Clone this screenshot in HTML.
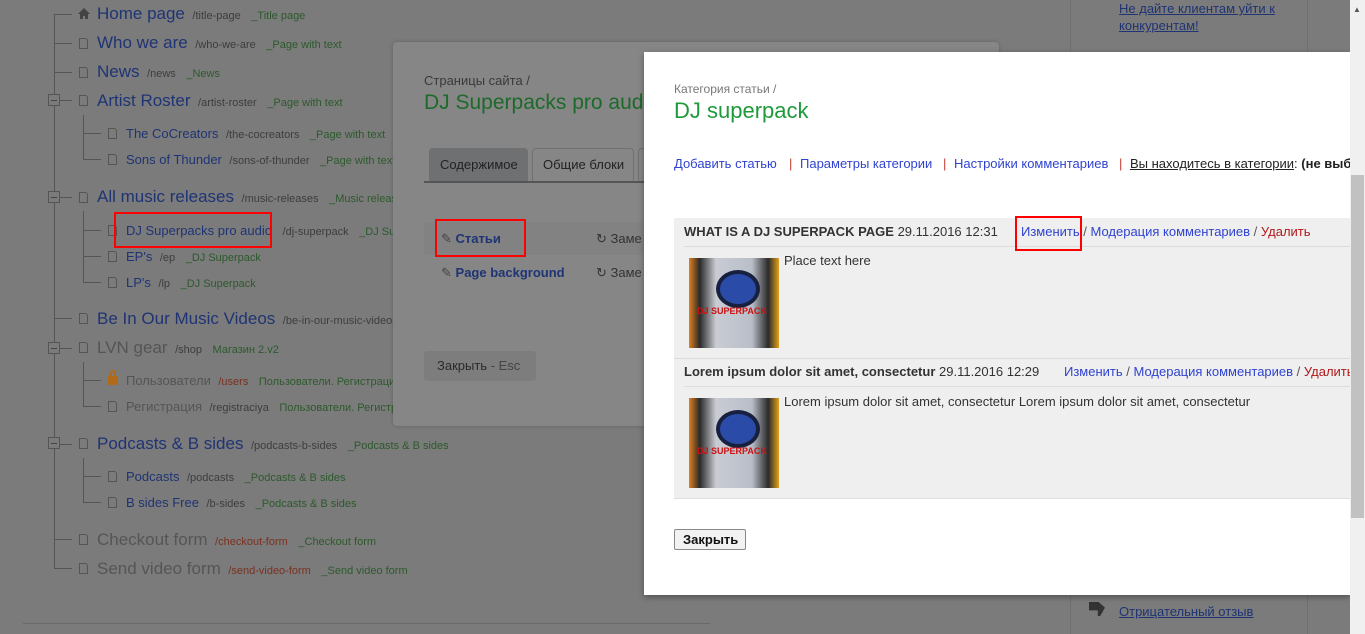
<!DOCTYPE html>
<html><head><meta charset="utf-8"><style>
*{margin:0;padding:0;box-sizing:border-box}
body{width:1365px;height:634px;overflow:hidden;background:#7b7b7b;font-family:"Liberation Sans","Noto Sans CJK SC",sans-serif;position:relative}
.a{position:absolute;white-space:nowrap}
.l1{font-size:17px;color:#1f3474}
.l2{font-size:13px;color:#1f3474}
.p{font-size:11px;color:#3d3d3d}
.g{font-size:11px;color:#2c5a2c}
.gr{color:#555!important}
.r{color:#7a3020!important}
.vl{position:absolute;width:1px;background:#555}
.hl{position:absolute;height:1px;background:#555}
.ic{position:absolute;width:9px;height:11px;border:1px solid #555;border-radius:0 3px 0 0}
.mb{position:absolute;width:12px;height:12px;border:1px solid #555;background:#7b7b7b}
.mb:after{content:"";position:absolute;left:2px;right:2px;top:5px;height:1px;background:#444}
.red{position:absolute;border:2px solid #f00}
.thumb{position:absolute;width:90px;height:90px;background:linear-gradient(90deg,#e2801c 0,#2a2a2a 12%,#c9ccd3 30%,#b9bec8 70%,#2a2a2a 88%,#e2a01c 100%)}
.thumb:before{content:"";position:absolute;left:27px;top:12px;width:36px;height:30px;border-radius:50%;background:#2a4ca8;border:4px solid #182040}
.thumb:after{content:"DJ SUPERPACK";position:absolute;left:8px;top:48px;font:bold 9px "Liberation Sans",sans-serif;color:#d01010}
.ml{color:#2f43d0}
.sep{color:#c04030}
</style></head><body>

<div class="vl" style="left:54px;top:14px;height:555px"></div>
<div class="hl" style="left:54px;top:14px;width:18px"></div>
<div class="hl" style="left:54px;top:43px;width:18px"></div>
<div class="hl" style="left:54px;top:72px;width:18px"></div>
<div class="hl" style="left:54px;top:100px;width:18px"></div>
<div class="hl" style="left:54px;top:197px;width:18px"></div>
<div class="hl" style="left:54px;top:318px;width:18px"></div>
<div class="hl" style="left:54px;top:348px;width:18px"></div>
<div class="hl" style="left:54px;top:444px;width:18px"></div>
<div class="hl" style="left:54px;top:539px;width:18px"></div>
<div class="hl" style="left:54px;top:568px;width:18px"></div>
<div class="vl" style="left:83px;top:115px;height:45px"></div>
<div class="hl" style="left:83px;top:133px;width:18px"></div><div class="hl" style="left:83px;top:159px;width:18px"></div>
<div class="vl" style="left:83px;top:211px;height:71px"></div>
<div class="hl" style="left:83px;top:230px;width:18px"></div><div class="hl" style="left:83px;top:256px;width:18px"></div><div class="hl" style="left:83px;top:282px;width:18px"></div>
<div class="vl" style="left:83px;top:362px;height:44px"></div>
<div class="hl" style="left:83px;top:380px;width:18px"></div><div class="hl" style="left:83px;top:406px;width:18px"></div>
<div class="vl" style="left:83px;top:458px;height:44px"></div>
<div class="hl" style="left:83px;top:476px;width:18px"></div><div class="hl" style="left:83px;top:502px;width:18px"></div>
<div class="mb" style="left:48px;top:94px"></div><div class="mb" style="left:48px;top:191px"></div><div class="mb" style="left:48px;top:342px"></div><div class="mb" style="left:48px;top:437px"></div>

<svg class="a" style="left:78px;top:8px" width="12" height="11" viewBox="0 0 12 11"><path d="M6 0L0 6h2v5h3V8h2v3h3V6h2z" fill="#444"/></svg>
<div class="ic" style="left:79px;top:38px"></div><div class="ic" style="left:79px;top:67px"></div><div class="ic" style="left:79px;top:95px"></div>
<div class="ic" style="left:108px;top:128px"></div><div class="ic" style="left:108px;top:154px"></div>
<div class="ic" style="left:79px;top:192px"></div><div class="ic" style="left:108px;top:225px"></div><div class="ic" style="left:108px;top:251px"></div><div class="ic" style="left:108px;top:277px"></div>
<div class="ic" style="left:79px;top:313px"></div><div class="ic" style="left:79px;top:342px"></div>
<div class="a" style="left:108px;top:376px;width:10px;height:9px;background:#b06a1a;border-radius:1px"></div>
<div class="a" style="left:110px;top:370px;width:6px;height:8px;border:2px solid #b06a1a;border-bottom:0;border-radius:3px 3px 0 0"></div>
<div class="ic" style="left:108px;top:401px"></div><div class="ic" style="left:79px;top:438px"></div><div class="ic" style="left:108px;top:471px"></div><div class="ic" style="left:108px;top:497px"></div><div class="ic" style="left:79px;top:534px"></div><div class="ic" style="left:79px;top:563px"></div>

<div class="a" style="left:97px;top:4px"><span class="l1">Home page</span> <span class="p">&nbsp;/title-page</span> <span class="g">&nbsp;&nbsp;_Title page</span></div>
<div class="a" style="left:97px;top:33px"><span class="l1">Who we are</span> <span class="p">&nbsp;/who-we-are</span> <span class="g">&nbsp;&nbsp;_Page with text</span></div>
<div class="a" style="left:97px;top:62px"><span class="l1">News</span> <span class="p">&nbsp;/news</span> <span class="g">&nbsp;&nbsp;_News</span></div>
<div class="a" style="left:97px;top:91px"><span class="l1">Artist Roster</span> <span class="p">&nbsp;/artist-roster</span> <span class="g">&nbsp;&nbsp;_Page with text</span></div>
<div class="a" style="left:126px;top:125px"><span class="l2">The CoCreators</span> <span class="p">&nbsp;/the-cocreators</span> <span class="g">&nbsp;&nbsp;_Page with text</span></div>
<div class="a" style="left:126px;top:151px"><span class="l2">Sons of Thunder</span> <span class="p">&nbsp;/sons-of-thunder</span> <span class="g">&nbsp;&nbsp;_Page with text</span></div>
<div class="a" style="left:97px;top:187px"><span class="l1">All music releases</span> <span class="p">&nbsp;/music-releases</span> <span class="g">&nbsp;&nbsp;_Music releases</span></div>
<div class="a" style="left:126px;top:222px"><span class="l2">DJ Superpacks pro audio</span> <span class="p">&nbsp;&nbsp;/dj-superpack</span> <span class="g">&nbsp;&nbsp;_DJ Superpack</span></div>
<div class="a" style="left:126px;top:248px"><span class="l2">EP's</span> <span class="p">&nbsp;/ep</span> <span class="g">&nbsp;&nbsp;_DJ Superpack</span></div>
<div class="a" style="left:126px;top:274px"><span class="l2">LP's</span> <span class="p">&nbsp;/lp</span> <span class="g">&nbsp;&nbsp;_DJ Superpack</span></div>
<div class="a" style="left:97px;top:309px"><span class="l1">Be In Our Music Videos</span> <span class="p">&nbsp;/be-in-our-music-videos</span></div>
<div class="a" style="left:97px;top:338px"><span class="l1 gr">LVN gear</span> <span class="p">&nbsp;/shop</span> <span class="g">&nbsp;&nbsp;Магазин 2.v2</span></div>
<div class="a" style="left:126px;top:372px"><span class="l2 gr">Пользователи</span> <span class="p r">&nbsp;/users</span> <span class="g">&nbsp;&nbsp;Пользователи. Регистрация</span></div>
<div class="a" style="left:126px;top:398px"><span class="l2 gr">Регистрация</span> <span class="p">&nbsp;/registraciya</span> <span class="g">&nbsp;&nbsp;Пользователи. Регистрация</span></div>
<div class="a" style="left:97px;top:434px"><span class="l1">Podcasts &amp; B sides</span> <span class="p">&nbsp;/podcasts-b-sides</span> <span class="g">&nbsp;&nbsp;_Podcasts &amp; B sides</span></div>
<div class="a" style="left:126px;top:468px"><span class="l2">Podcasts</span> <span class="p">&nbsp;/podcasts</span> <span class="g">&nbsp;&nbsp;_Podcasts &amp; B sides</span></div>
<div class="a" style="left:126px;top:494px"><span class="l2">B sides Free</span> <span class="p">&nbsp;/b-sides</span> <span class="g">&nbsp;&nbsp;_Podcasts &amp; B sides</span></div>
<div class="a" style="left:97px;top:530px"><span class="l1 gr">Checkout form</span> <span class="p r">&nbsp;/checkout-form</span> <span class="g">&nbsp;&nbsp;_Checkout form</span></div>
<div class="a" style="left:97px;top:559px"><span class="l1 gr">Send video form</span> <span class="p r">&nbsp;/send-video-form</span> <span class="g">&nbsp;&nbsp;_Send video form</span></div>
<div class="hl" style="left:23px;top:623px;width:687px;background:#6a6a6a"></div>
<div class="red" style="left:114px;top:212px;width:158px;height:36px"></div>

<div class="vl" style="left:1070px;top:0;height:634px;background:#707070"></div>
<div class="vl" style="left:1307px;top:0;height:634px;background:#707070"></div>
<div class="a" style="left:1119px;top:0;font-size:13px;color:#1f3474;text-decoration:underline;line-height:17px">Не дайте клиентам уйти к<br>конкурентам!</div>
<div class="a" style="left:1089px;top:602px;width:16px;height:14px;background:#333;clip-path:polygon(0 0,60% 0,100% 40%,70% 100%,55% 100%,55% 60%,0 60%)"></div>
<div class="a" style="left:1119px;top:604px;font-size:13px;color:#1f3474;text-decoration:underline">Отрицательный отзыв</div>

<div class="a" style="left:393px;top:42px;width:606px;height:384px;background:#868686;border-radius:4px;box-shadow:0 0 4px rgba(0,0,0,.2)"></div>
<div class="a" style="left:424px;top:73px;font-size:13px;color:#3a3a3a">Страницы сайта /</div>
<div class="a" style="left:424px;top:91px;font-size:21px;color:#1d6a2a">DJ Superpacks pro audio</div>
<div class="a" style="left:429px;top:148px;width:99px;height:33px;background:#6e7072;border-radius:4px 4px 0 0;font-size:13px;color:#222;padding:9px 0 0 11px">Содержимое</div>
<div class="a" style="left:532px;top:148px;width:102px;height:33px;border:1px solid #707070;border-bottom:0;border-radius:4px 4px 0 0;font-size:13px;color:#222;padding:8px 0 0 10px">Общие блоки</div>
<div class="a" style="left:638px;top:148px;width:10px;height:33px;border:1px solid #707070;border-bottom:0;border-radius:4px 0 0 0"></div>
<div class="hl" style="left:424px;top:181px;height:2px;width:230px;background:#555"></div>
<div class="a" style="left:424px;top:222px;width:220px;height:33px;background:#828282;border-radius:4px"></div>
<div class="a" style="left:441px;top:231px;font-size:13px;font-weight:bold;color:#1f3474"><span style="color:#444;font-weight:normal">&#9998;</span> Статьи</div>
<div class="a" style="left:441px;top:265px;font-size:13px;font-weight:bold;color:#1f3474"><span style="color:#444;font-weight:normal">&#9998;</span> Page background</div>
<div class="a" style="left:596px;top:231px;font-size:13px;color:#333">&#8635; Заме</div>
<div class="a" style="left:596px;top:265px;font-size:13px;color:#333">&#8635; Заме</div>
<div class="red" style="left:435px;top:219px;width:91px;height:38px"></div>
<div class="a" style="left:424px;top:351px;width:112px;height:30px;background:#7d7d7d;border-radius:3px;font-size:13px;color:#2a2a2a;padding:7px 0 0 13px">Закрыть <span style="color:#444">- Esc</span></div>

<div class="a" style="left:644px;top:52px;width:706px;height:543px;background:#fff;box-shadow:0 2px 6px rgba(0,0,0,.35)"></div>
<div class="a" style="left:674px;top:82px;font-size:12px;color:#777">Категория статьи /</div>
<div class="a" style="left:674px;top:98px;font-size:22px;color:#1e9a3a">DJ superpack</div>
<div class="a ml" style="left:674px;top:156px;font-size:13px">Добавить статью</div>
<div class="a sep" style="left:789px;top:156px;font-size:13px">|</div>
<div class="a ml" style="left:800px;top:156px;font-size:13px">Параметры категории</div>
<div class="a sep" style="left:943px;top:156px;font-size:13px">|</div>
<div class="a ml" style="left:954px;top:156px;font-size:13px">Настройки комментариев</div>
<div class="a sep" style="left:1119px;top:156px;font-size:13px">|</div>
<div class="a" style="left:1130px;top:156px;font-size:13px;color:#222"><span style="text-decoration:underline">Вы находитесь в категории</span>: <b>(не выбрано)</b></div>

<div class="a" style="left:674px;top:218px;width:676px;height:280px;background:#efefef"></div>
<div class="hl" style="left:684px;top:246px;width:666px;background:#ddd"></div>
<div class="hl" style="left:674px;top:358px;width:676px;background:#ddd"></div>
<div class="hl" style="left:684px;top:386px;width:666px;background:#ddd"></div>
<div class="hl" style="left:674px;top:498px;width:676px;background:#ddd"></div>
<div class="a" style="left:684px;top:224px;font-size:13px;color:#333"><b>WHAT IS A DJ SUPERPACK PAGE</b> 29.11.2016 12:31</div>
<div class="a" style="left:1021px;top:224px;font-size:13px;color:#555"><span class="ml">Изменить</span> / <span class="ml">Модерация комментариев</span> / <span style="color:#b01818">Удалить</span></div>
<div class="red" style="left:1015px;top:216px;width:67px;height:35px"></div>
<div class="thumb" style="left:689px;top:258px"></div>
<div class="a" style="left:784px;top:253px;font-size:13px;color:#333">Place text here</div>
<div class="a" style="left:684px;top:364px;font-size:13px;color:#333"><b>Lorem ipsum dolor sit amet, consectetur</b> 29.11.2016 12:29</div>
<div class="a" style="left:1064px;top:364px;font-size:13px;color:#555"><span class="ml">Изменить</span> / <span class="ml">Модерация комментариев</span> / <span style="color:#b01818">Удалить</span></div>
<div class="thumb" style="left:689px;top:398px"></div>
<div class="a" style="left:784px;top:394px;font-size:13px;color:#333">Lorem ipsum dolor sit amet, consectetur Lorem ipsum dolor sit amet, consectetur</div>
<div class="a" style="left:674px;top:529px;width:72px;height:21px;background:#f2f2f2;border:1px solid #888;border-radius:2px;font-size:13px;font-weight:bold;color:#111;padding:2px 0 0 8px">Закрыть</div>

<div class="a" style="left:1350px;top:0;width:15px;height:634px;background:#f0f0f0"></div>
<div class="a" style="left:1351px;top:175px;width:13px;height:343px;background:#c1c1c1"></div>
<div class="a" style="left:1353px;top:5px;font-size:8px;color:#555">&#9650;</div>
</body></html>
